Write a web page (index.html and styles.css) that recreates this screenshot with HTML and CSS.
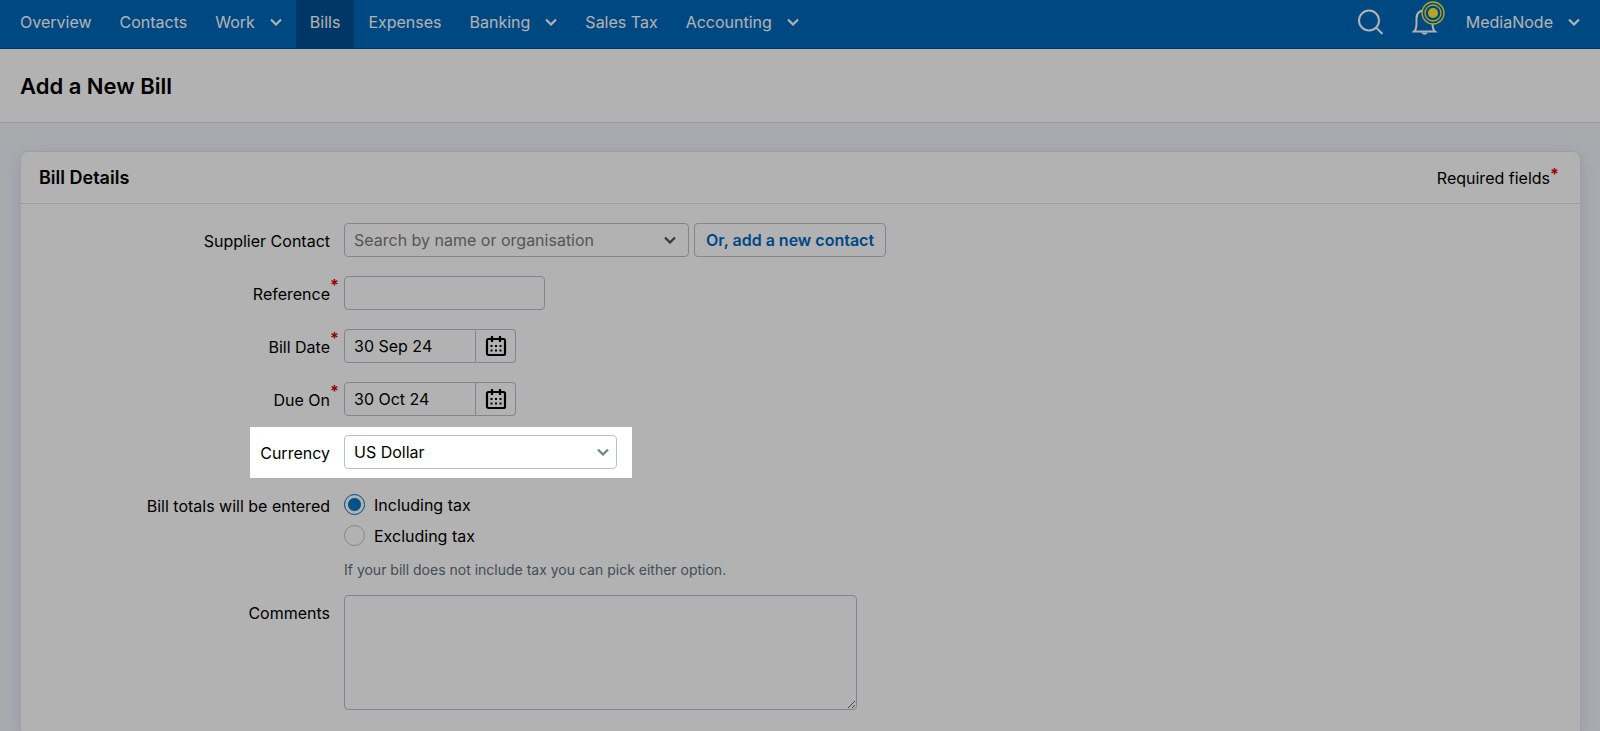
FILE: index.html
```html
<!DOCTYPE html>
<html lang="en">
<head>
    <meta charset="UTF-8">
    <meta name="viewport" content="width=device-width, initial-scale=1.0">
    <title>Add a New Bill</title>
    <link rel="stylesheet" href="styles.css">
</head>
<body>

    <svg class="sprite" aria-hidden="true">
        <symbol id="chevron" viewBox="0 0 12 8">
            <path d="M1 1.5 L6 6.5 L11 1.5" fill="none" stroke="currentColor" stroke-width="2.2"/>
        </symbol>
        <symbol id="calendar" viewBox="0 0 22 22">
            <rect x="2" y="4" width="18" height="16" rx="1.5" fill="none" stroke="currentColor" stroke-width="2.2"/>
            <path d="M7 1v6M15 1v6" stroke="currentColor" stroke-width="2.2"/>
            <path d="M5.5 11h2M10 11h2M14.5 11h2M5.5 15.5h2M10 15.5h2M14.5 15.5h2" stroke="currentColor" stroke-width="2"/>
        </symbol>
    </svg>

    <nav class="navbar">
        <div class="nav-group">
            <a href="#" class="nav-item">Overview</a>
            <a href="#" class="nav-item">Contacts</a>
            <button type="button" class="nav-item">Work <svg class="chevron"><use href="#chevron"/></svg></button>
            <a href="#" class="nav-item active">Bills</a>
            <a href="#" class="nav-item">Expenses</a>
            <button type="button" class="nav-item">Banking <svg class="chevron"><use href="#chevron"/></svg></button>
            <a href="#" class="nav-item">Sales Tax</a>
            <button type="button" class="nav-item">Accounting <svg class="chevron"><use href="#chevron"/></svg></button>
        </div>
        <div class="nav-group">
            <button type="button" class="nav-item" aria-label="Search">
                <svg class="nav-icon" viewBox="0 0 26 26" fill="none" stroke="currentColor" stroke-width="2">
                    <circle cx="11" cy="11.5" r="10"/>
                    <path d="M18 18.5 L24.5 25"/>
                </svg>
            </button>
            <button type="button" class="nav-item bell" aria-label="Notifications">
                <svg class="nav-icon" viewBox="0 0 26 26" fill="none" stroke="currentColor" stroke-width="2">
                    <path d="M2 22.5 C4.5 20.5 4.5 18 4.5 14 V9.500 C4.500 4 8 1.500 12.500 1.500 S20.500 4 20.500 9.500 V14 C20.500 18 20.500 20.500 23 22.500 Z"/>
                    <path d="M9 23.5 Q12.500 28 16 23.500 Z" fill="currentColor" stroke="none"/>
                </svg>
                <svg class="bell-badge" viewBox="0 0 24 24" fill="none" stroke="#fff02b">
                    <circle cx="12" cy="12" r="11" fill="#0067bb" stroke-width="1.3"/>
                    <circle cx="12" cy="12" r="8" stroke-width="1.3"/>
                    <circle cx="12" cy="12" r="5" fill="#fff02b" stroke="none"/>
                </svg>
            </button>
            <button type="button" class="nav-item">MediaNode <svg class="chevron"><use href="#chevron"/></svg></button>
        </div>
    </nav>

    <header class="page-header">
        <h1>Add a New Bill</h1>
    </header>

    <main class="content">
        <section class="card">
            <div class="card-header">
                <h2>Bill Details</h2>
                <span class="required">Required fields</span>
            </div>

            <form class="bill-form">
                <div class="row">
                    <label for="supplier">Supplier Contact</label>
                    <div class="field">
                        <div class="select-wrap supplier">
                            <input type="text" id="supplier" class="control" placeholder="Search by name or organisation">
                            <svg class="chevron"><use href="#chevron"/></svg>
                        </div>
                        <button type="button" class="btn">Or, add a new contact</button>
                    </div>
                </div>

                <div class="row">
                    <label for="reference" class="required">Reference</label>
                    <div class="field">
                        <input type="text" id="reference" class="control reference">
                    </div>
                </div>

                <div class="row">
                    <label for="bill-date" class="required">Bill Date</label>
                    <div class="field date">
                        <input type="text" id="bill-date" class="control" value="30 Sep 24">
                        <button type="button" class="date-btn" aria-label="Pick bill date"><svg><use href="#calendar"/></svg></button>
                    </div>
                </div>

                <div class="row">
                    <label for="due-on" class="required">Due On</label>
                    <div class="field date">
                        <input type="text" id="due-on" class="control" value="30 Oct 24">
                        <button type="button" class="date-btn" aria-label="Pick due date"><svg><use href="#calendar"/></svg></button>
                    </div>
                </div>

                <div class="row">
                    <label for="currency">Currency</label>
                    <div class="field">
                        <div class="select-wrap currency">
                            <select id="currency" class="control">
                                <option>US Dollar</option>
                            </select>
                            <svg class="chevron"><use href="#chevron"/></svg>
                        </div>
                    </div>
                    <div class="spotlight"></div>
                </div>

                <div class="row" role="radiogroup" aria-labelledby="totals-label">
                    <span class="label" id="totals-label">Bill totals will be entered</span>
                    <div class="options">
                        <label class="option"><input type="radio" name="tax" checked> Including tax</label>
                        <label class="option"><input type="radio" name="tax"> Excluding tax</label>
                        <p class="hint">If your bill does not include tax you can pick either option.</p>
                    </div>
                </div>

                <div class="row">
                    <label for="comments">Comments</label>
                    <div class="field">
                        <textarea id="comments" class="control comments"></textarea>
                    </div>
                </div>
            </form>
        </section>
    </main>

</body>
</html>
```
FILE: styles.css
```css
* {
    box-sizing: border-box;
}

body {
    margin: 0;
    min-height: 100vh;
    display: flex;
    flex-direction: column;
    font-family: Inter, "Liberation Sans", sans-serif;
    font-size: 16px;
    line-height: 20px;
    color: #000;
    background-color: #f1f5fa;
}

button,
input,
select,
textarea {
    font: inherit;
    color: inherit;
}

button {
    cursor: pointer;
}

.sprite {
    display: none;
}

.chevron {
    width: 12px;
    height: 8px;
    flex-shrink: 0;
}

/* navigation */
.navbar {
    display: flex;
    justify-content: space-between;
    height: 49px;
    padding: 0 6px;
    background-color: #0067bb;
    border-bottom: 1px solid #00509a;
}

.nav-group {
    display: flex;
}

.nav-item {
    display: flex;
    align-items: center;
    gap: 15px;
    padding: 0 14px 4px;
    border: none;
    background: none;
    color: #fff;
    text-decoration: none;
}

.nav-item.active {
    background-color: #005093;
}

.nav-icon {
    width: 26px;
    height: 26px;
}

.bell {
    position: relative;
}

.bell-badge {
    position: absolute;
    top: 1px;
    right: 7px;
    width: 24px;
    height: 24px;
}

.page-header {
    padding: 25px 20px 23px;
    background-color: #fff;
    border-bottom: 1px solid #dde1e5;
}

h1 {
    margin: 0;
    font-size: 22px;
    line-height: 25px;
    font-weight: 600;
}

/* card */
.content {
    flex: 1;
    display: flex;
    padding: 28px 19px 0 20px;
}

.card {
    flex: 1;
    background-color: #fff;
    border: 1px solid #e2e6ec;
    border-bottom: none;
    border-radius: 8px 8px 0 0;
    box-shadow: 0 4px 16px rgba(60, 90, 150, 0.15);
}

.card-header {
    display: flex;
    justify-content: space-between;
    align-items: center;
    padding: 16px 30px 15px 18px;
    border-bottom: 1px solid #dde1e5;
}

h2 {
    margin: 0;
    font-size: 18px;
    line-height: 20px;
    font-weight: 600;
}

.required {
    position: relative;
}

.required::after {
    content: "*";
    position: absolute;
    top: -1px;
    left: 100%;
    color: #dc0000;
    font-weight: 700;
}

.card-header .required::after {
    top: -4px;
}

/* form */
.bill-form {
    display: flex;
    flex-direction: column;
    gap: 19px;
    padding: 19px 0;
}

.row {
    position: relative;
    display: grid;
    grid-template-columns: 309px 1fr;
    column-gap: 14px;
    align-items: start;
}

.row > label,
.label {
    justify-self: end;
    padding-top: 8px;
}

.field {
    display: flex;
    gap: 5px;
}

.control {
    height: 34px;
    padding: 0 9px;
    background-color: #fff;
    border: 1px solid #b8c1c8;
    border-radius: 4px;
}

.control::placeholder {
    color: #7b7b7b;
    opacity: 1;
}

.select-wrap {
    position: relative;
}

.select-wrap .control {
    width: 100%;
    appearance: none;
}

.select-wrap .chevron {
    position: absolute;
    top: 13px;
    right: 13px;
    color: #44525e;
    pointer-events: none;
}

.supplier {
    width: 345px;
}

.reference {
    width: 201px;
}

.currency {
    width: 273px;
}

.currency .chevron {
    right: 8px;
    color: #71828f;
}

.btn {
    height: 34px;
    padding: 0 11px;
    background-color: #fff;
    border: 1px solid #b8c1c8;
    border-radius: 4px;
    color: #0067c0;
    font-weight: 600;
}

.date {
    gap: 0;
}

.date .control {
    width: 132px;
    border-radius: 4px 0 0 4px;
}

.date-btn {
    display: flex;
    align-items: center;
    justify-content: center;
    width: 40px;
    padding: 0;
    background-color: #fff;
    border: 1px solid #b8c1c8;
    border-left: none;
    border-radius: 0 4px 4px 0;
}

.date-btn svg {
    width: 22px;
    height: 22px;
}

/* dims everything outside the highlighted row */
.spotlight {
    position: absolute;
    top: -8px;
    left: 229px;
    width: 382px;
    height: 51px;
    box-shadow: 0 0 0 9999px rgba(0, 0, 0, 0.3);
    pointer-events: none;
    z-index: 10;
}

.options {
    display: flex;
    flex-direction: column;
    gap: 10px;
    padding-top: 6px;
}

.option {
    display: flex;
    align-items: center;
    gap: 9px;
    height: 21px;
}

.option input {
    appearance: none;
    width: 21px;
    height: 21px;
    margin: 0;
    background-color: #fff;
    border: 1px solid #b8c1c8;
    border-radius: 50%;
}

.option input:checked {
    border-color: #0067bb;
    background-image: radial-gradient(circle, #0078c1 6px, transparent 7px);
}

.hint {
    margin: 6px 0 -2px;
    font-size: 14px;
    line-height: 16px;
    color: #5e6f7d;
}

.comments {
    width: 513px;
    height: 115px;
    padding: 8px 9px;
}
```
